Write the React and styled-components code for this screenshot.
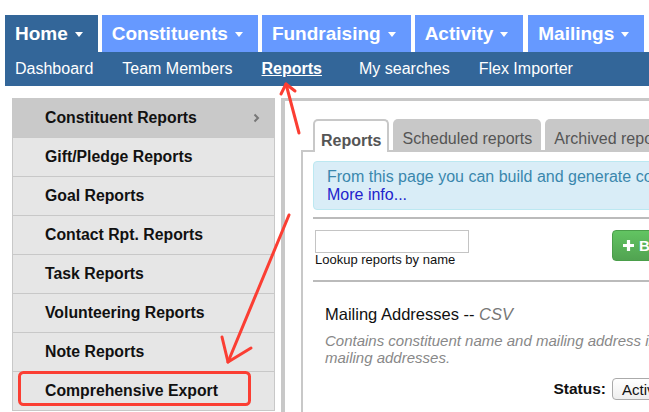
import styled, { createGlobalStyle } from 'styled-components';

const GlobalStyle = createGlobalStyle`
  html, body {
    margin: 0;
    padding: 0;
    background: #ffffff;
    overflow: hidden;
  }
  body {
    width: 649px;
    height: 412px;
    font-family: "Liberation Sans", Arial, Helvetica, sans-serif;
    color: #111111;
  }
`;

const Page = styled.div`
  position: relative;
  width: 649px;
  height: 412px;
  overflow: hidden;
`;

const Header = styled.header`
  padding: 15px 0 0 5px;
`;

const MainNav = styled.nav`
  display: flex;
  height: 37px;
  gap: 4px;
`;

const NavTab = styled.div`
  display: flex;
  align-items: center;
  gap: 7px;
  padding: 0 15px 0 10px;
  background: ${(p) => (p.$active ? '#336699' : '#6699ff')};
  color: #ffffff;
  font-size: 19px;
  font-weight: bold;
  white-space: nowrap;
  margin-right: ${(p) => p.$extra || 0}px;
`;

const Caret = styled.span`
  width: 0;
  height: 0;
  border-left: 4.5px solid transparent;
  border-right: 4.5px solid transparent;
  border-top: 5px solid #ffffff;
  margin-top: 2px;
`;

const SubNav = styled.nav`
  display: flex;
  align-items: center;
  gap: 29px;
  height: 34px;
  padding-left: 10px;
  background: #336699;
`;

const SubLink = styled.a`
  color: #ffffff;
  font-size: 16px;
  white-space: nowrap;
  font-weight: ${(p) => (p.$active ? 'bold' : 'normal')};
  text-decoration: ${(p) => (p.$active ? 'underline' : 'none')};
  margin-right: ${(p) => (p.$active ? 8 : 0)}px;
`;

const Main = styled.div`
  display: flex;
  align-items: flex-start;
  gap: 6px;
  padding: 12px 0 0 12px;
`;

const Sidebar = styled.ul`
  list-style: none;
  margin: 0;
  padding: 0;
  width: 261px;
  flex: none;
  border-left: 1px solid #c8c8c8;
  border-right: 1px solid #c8c8c8;
`;

const SideItem = styled.li`
  display: flex;
  align-items: center;
  justify-content: space-between;
  height: ${(p) => (p.$first ? 39 : 38)}px;
  padding: 0 14px 0 32px;
  border-bottom: 1px solid #c8c8c8;
  background: ${(p) => (p.$active ? '#c9c9c9' : '#e6e6e6')};
  font-size: 15.8px;
  font-weight: bold;
  color: #111111;
  white-space: nowrap;
`;

const ContentBox = styled.section`
  flex: none;
  width: 600px;
  height: 330px;
  border-top: 3px solid #c8c8c8;
  border-left: 4px solid #c8c8c8;
  padding: 20px 0 0 16px;
`;

const TabList = styled.div`
  display: flex;
  align-items: flex-end;
  gap: 4px;
  height: 31px;
  padding-left: 12px;
  margin-bottom: -2px;
  position: relative;
  z-index: 1;
`;

const Tab = styled.div`
  display: flex;
  align-items: center;
  box-sizing: border-box;
  height: ${(p) => (p.$active ? 33 : 31)}px;
  padding: ${(p) => (p.$active ? '8px 6px 0' : '8px 9px 0')};
  font-size: 16px;
  white-space: nowrap;
  color: #555555;
  font-weight: ${(p) => (p.$active ? 'bold' : 'normal')};
  background: ${(p) => (p.$active ? '#ffffff' : '#c8c8c8')};
  border: ${(p) => (p.$active ? '2px solid #c8c8c8' : 'none')};
  border-bottom: none;
  border-radius: 5px 5px 0 0;
  margin-bottom: ${(p) => (p.$active ? 0 : 2)}px;
`;

const TabPanel = styled.div`
  border-top: 2px solid #c8c8c8;
  border-left: 2px solid #c8c8c8;
  padding: 9px 0 0 10px;
  height: 260px;
`;

const InfoBox = styled.div`
  padding: 6px 13px 5px;
  border: 1px solid #bce8f1;
  border-radius: 4px;
  background: #d9edf7;
  color: #3a87ad;
  font-size: 16px;
  line-height: 18px;
  white-space: nowrap;
`;

const MoreLink = styled.a`
  color: #2222cc;
  text-decoration: none;
`;

const Rule = styled.div`
  height: 2px;
  background: #bbbbbb;
  margin-top: ${(p) => p.$top}px;
`;

const SearchRow = styled.div`
  display: grid;
  grid-template-columns: 297px auto;
  align-items: start;
  margin-top: 11px;
  padding-left: 2px;
`;

const SearchField = styled.div`
  display: flex;
  flex-direction: column;
`;

const SearchInput = styled.input`
  box-sizing: border-box;
  width: 154px;
  height: 23px;
  margin: 0;
  border: 1px solid #c4c4c4;
  padding: 2px 4px;
  font: inherit;
`;

const FieldLabel = styled.label`
  font-size: 13px;
  line-height: 14px;
  color: #111111;
`;

const BuildButton = styled.button`
  display: flex;
  align-items: center;
  gap: 4px;
  height: 31px;
  padding: 0 12px 0 9px;
  border: 1px solid #4a9e4a;
  border-radius: 4px;
  background: linear-gradient(#62c462, #51a351);
  color: #ffffff;
  font-family: inherit;
  font-size: 15px;
  font-weight: bold;
  white-space: nowrap;
`;

const ReportItem = styled.div`
  padding: 22px 0 0 12px;
`;

const ReportTitle = styled.div`
  font-size: 16.5px;
  line-height: 20px;
  color: #111111;
`;

const Format = styled.em`
  color: #777777;
`;

const ReportDesc = styled.p`
  margin: 8px 0 0;
  font-size: 15px;
  line-height: 17px;
  font-style: italic;
  color: #888888;
  width: 470px;
`;

const StatusRow = styled.div`
  display: grid;
  grid-template-columns: 281px auto;
  column-gap: 6px;
  align-items: center;
  margin-top: 12px;
`;

const StatusLabel = styled.span`
  text-align: right;
  font-size: 15.5px;
  font-weight: bold;
`;

const StatusSelect = styled.div`
  display: flex;
  align-items: center;
  height: 22px;
  width: 90px;
  box-sizing: border-box;
  padding: 0 9px;
  border: 1px solid #aaaaaa;
  border-radius: 4px;
  background: linear-gradient(#ffffff, #eeeeee);
  font-size: 15px;
`;

const Annotations = styled.svg`
  position: absolute;
  left: 0;
  top: 0;
  pointer-events: none;
`;

const navTabs = ['Home', 'Constituents', 'Fundraising', 'Activity', 'Mailings'];
const subLinks = ['Dashboard', 'Team Members', 'Reports', 'My searches', 'Flex Importer'];
const sideItems = [
  'Constituent Reports',
  'Gift/Pledge Reports',
  'Goal Reports',
  'Contact Rpt. Reports',
  'Task Reports',
  'Volunteering Reports',
  'Note Reports',
  'Comprehensive Export',
];

const Chevron = () => (
  <svg width="7" height="10" viewBox="0 0 7 10">
    <path d="M1.5 1.5 L5 5 L1.5 8.5" fill="none" stroke="#777" strokeWidth="2" />
  </svg>
);

const Plus = () => (
  <svg width="13" height="13" viewBox="0 0 13 13">
    <path d="M6.5 1 V12 M1 6.5 H12" stroke="#fff" strokeWidth="3.2" />
  </svg>
);

export default function App() {
  return (
    <Page>
      <GlobalStyle />
      <Header>
        <MainNav>
          {navTabs.map((name, i) => (
            <NavTab key={name} $active={i === 0} $extra={name === 'Activity' ? 1 : 0}>
              {name}
              <Caret />
            </NavTab>
          ))}
        </MainNav>
        <SubNav>
          {subLinks.map((name) => (
            <SubLink key={name} $active={name === 'Reports'}>
              {name}
            </SubLink>
          ))}
        </SubNav>
      </Header>

      <Main>
        <Sidebar>
          {sideItems.map((name, i) => (
            <SideItem key={name} $first={i === 0} $active={i === 0}>
              {name}
              {i === 0 && <Chevron />}
            </SideItem>
          ))}
        </Sidebar>

        <ContentBox>
          <TabList>
            <Tab $active>Reports</Tab>
            <Tab>Scheduled reports</Tab>
            <Tab>Archived reports</Tab>
          </TabList>
          <TabPanel>
            <InfoBox>
              From this page you can build and generate constituent, gift and other reports.
              <br />
              <MoreLink>More info...</MoreLink>
            </InfoBox>
            <Rule $top={7} />
            <SearchRow>
              <SearchField>
                <SearchInput />
                <FieldLabel>Lookup reports by name</FieldLabel>
              </SearchField>
              <BuildButton>
                <Plus />
                Build new report
              </BuildButton>
            </SearchRow>
            <Rule $top={13} />
            <ReportItem>
              <ReportTitle>
                Mailing Addresses -- <Format>CSV</Format>
              </ReportTitle>
              <ReportDesc>
                Contains constituent name and mailing address information for all
                mailing addresses.
              </ReportDesc>
              <StatusRow>
                <StatusLabel>Status:</StatusLabel>
                <StatusSelect>Active</StatusSelect>
              </StatusRow>
            </ReportItem>
          </TabPanel>
        </ContentBox>
      </Main>

      {/* red annotation marks drawn over the screenshot */}
      <Annotations width="649" height="412" viewBox="0 0 649 412">
        <g fill="none" stroke="#fb3e33" strokeWidth="3" strokeLinecap="round" strokeLinejoin="round">
          <path d="M299 133 L286 84" />
          <path d="M281 94 L286 84 L295 91" />
          <path d="M289 215 L228 362" />
          <path d="M222 337 L228 362 L251 348" />
          <rect x="19.5" y="372.5" width="230" height="32" rx="4" />
        </g>
      </Annotations>
    </Page>
  );
}
